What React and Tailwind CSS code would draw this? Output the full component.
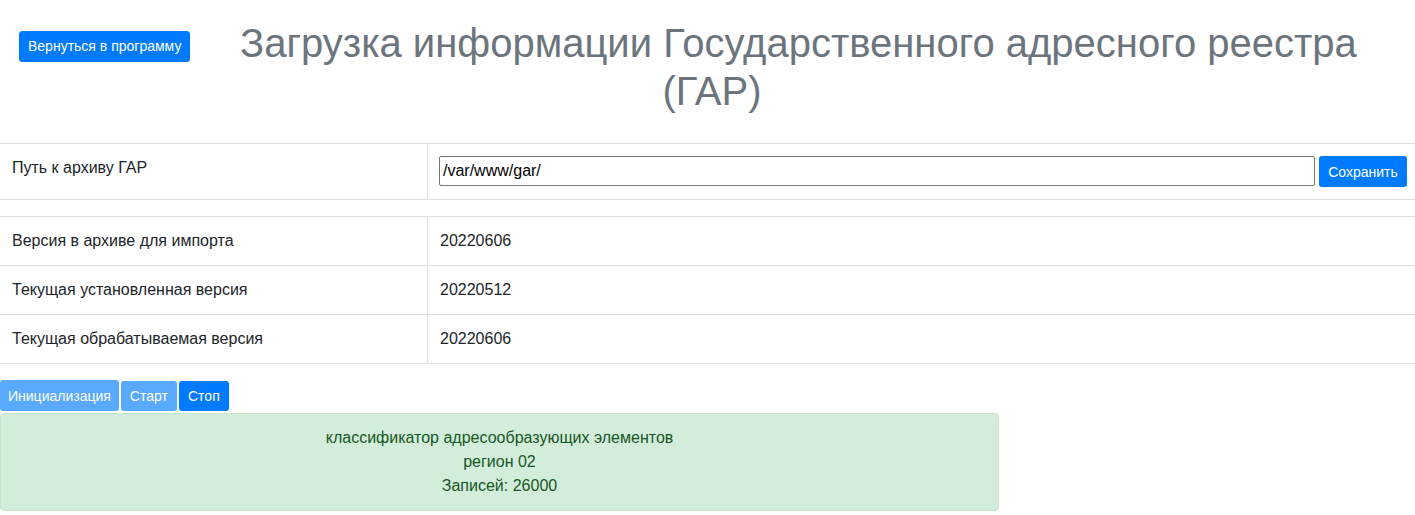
import React from "react";

const font = { fontFamily: '"Liberation Sans", Arial, sans-serif' };

const InfoRow = ({ label, value }) => (
  <div className="flex border-t border-[#dee2e6]">
    <div className="w-[427px] shrink-0 p-3 leading-6">{label}</div>
    <div className="flex-1 border-l border-[#dee2e6] p-3 leading-6">{value}</div>
  </div>
);

const App = () => {
  return (
    <div
      className="w-[1415px] min-h-[515px] bg-white text-base text-[#212529]"
      style={font}
    >
      {/* Header */}
      <div className="flex items-start pt-[19px] pb-[28px]">
        <div className="w-[240px] shrink-0 pl-[19px] pt-[12px]">
          <button className="h-[31px] rounded-[3px] border border-[#007bff] bg-[#007bff] px-2 text-sm leading-[21px] text-white">
            Вернуться в программу
          </button>
        </div>
        <h1 className="w-[944px] text-[40px] font-normal leading-[48px] text-[#6c757d]">
          <div className="whitespace-nowrap">
            Загрузка информации Государственного адресного реестра
          </div>
          <div className="text-center">(ГАР)</div>
        </h1>
      </div>

      {/* Path to archive */}
      <div className="mb-4 border-b border-[#dee2e6]">
        <div className="flex border-t border-[#dee2e6]">
          <div className="w-[427px] shrink-0 p-3 leading-6">Путь к архиву ГАР</div>
          <div className="flex flex-1 gap-1 border-l border-[#dee2e6] py-3 pl-[11px] pr-2">
            <input
              defaultValue="/var/www/gar/"
              className="h-[30px] flex-1 rounded-[2px] border border-[#767676] px-[3px] text-base text-black outline-none"
              style={font}
            />
            <button className="h-[31px] w-[88px] rounded-[3px] bg-[#007bff] text-sm text-white">
              Сохранить
            </button>
          </div>
        </div>
      </div>

      {/* Versions */}
      <div className="border-b border-[#dee2e6]">
        <InfoRow label="Версия в архиве для импорта" value="20220606" />
        <InfoRow label="Текущая установленная версия" value="20220512" />
        <InfoRow label="Текущая обрабатываемая версия" value="20220606" />
      </div>

      {/* Controls */}
      <div className="mt-4 flex items-end gap-[2px]">
        <button className="h-[31px] rounded-[3px] bg-[#59a9ff] px-2 text-sm text-white">
          Инициализация
        </button>
        <button className="h-[30px] w-[56px] rounded-[3px] bg-[#59a9ff] text-sm text-white">
          Старт
        </button>
        <button className="h-[30px] w-[50px] rounded-[3px] bg-[#007bff] text-sm text-white">
          Стоп
        </button>
      </div>

      <div className="mt-[2px] w-[999px] rounded border border-[#c3e6cb] bg-[#d4edda] py-3 text-center leading-6 text-[#155724]">
        <div>классификатор адресообразующих элементов</div>
        <div>регион 02</div>
        <div>Записей: 26000</div>
      </div>
    </div>
  );
};

export default App;
